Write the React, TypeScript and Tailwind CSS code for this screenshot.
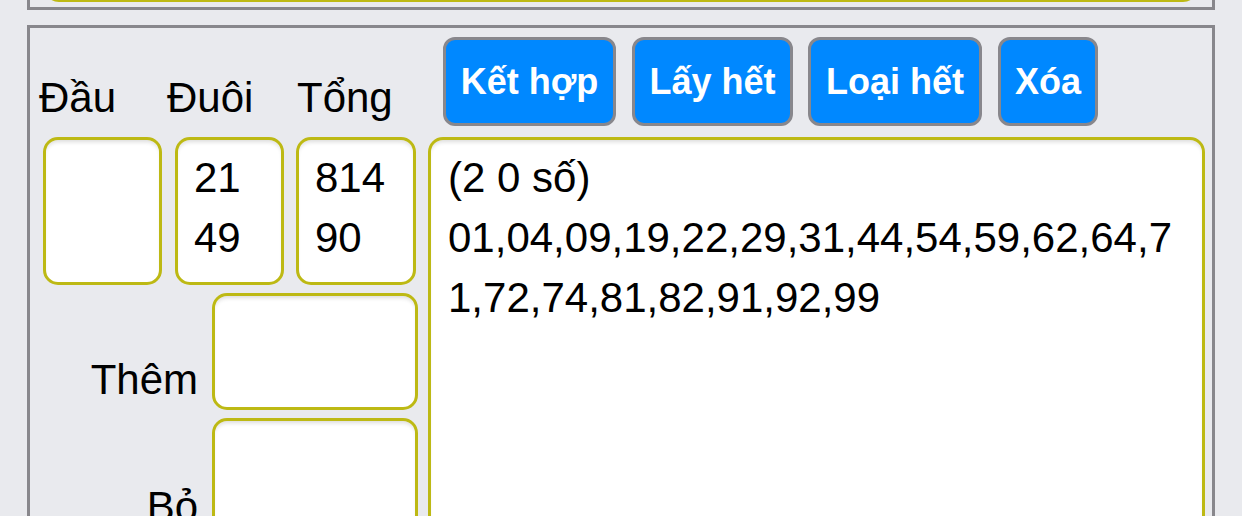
export default function App() {
  const box =
    "rounded-[15px] border-[3px] border-[#bdb914] bg-white shadow-[inset_0_4px_4px_-2px_rgba(0,0,0,0.14)]";
  const btn =
    "h-[89px] flex items-center justify-center rounded-[12px] border-[3px] border-[#88878c] bg-[#0088ff] text-white font-bold text-[36px] leading-none";
  return (
    <div className="h-[516px] w-[1242px] overflow-hidden bg-[#e9eaee] text-black font-['Liberation_Sans',Arial,sans-serif]">
      <div className="px-[27px]">
        <div className="h-[10px] overflow-hidden border-x-[3px] border-b-[3px] border-[#88878c]">
          <div className="mx-[14px] -mt-[40px] h-[42px] rounded-[15px] border-[3px] border-[#bdb914] bg-white" />
        </div>
        <div className="mt-[15px] flex h-[600px] border-[3px] border-[#88878c]">
          <div className="w-[398px] shrink-0 text-[42px] leading-[60px]">
            <div className="flex pl-[9px] pt-[40px]">
              <span className="w-[128px]">Đầu</span>
              <span className="w-[130px]">Đuôi</span>
              <span>Tổng</span>
            </div>
            <div className="mt-[9px] flex pl-[13px]">
              <div className={`${box} h-[148px] w-[119px]`} />
              <div className={`${box} ml-[13px] h-[148px] w-[109px] pl-[16px] pt-[8px]`}>
                <div>21</div>
                <div>49</div>
              </div>
              <div className={`${box} ml-[12px] h-[148px] w-[120px] pl-[16px] pt-[8px]`}>
                <div>814</div>
                <div>90</div>
              </div>
            </div>
            <div className="mt-[8px] flex items-end">
              <span className="w-[168px] text-right">Thêm</span>
              <div className={`${box} ml-[14px] h-[117px] w-[206px]`} />
            </div>
            <div className="mt-[8px] flex items-end">
              <span className="w-[168px] text-right">Bỏ</span>
              <div className={`${box} ml-[14px] h-[119px] w-[206px]`} />
            </div>
          </div>
          <div className="flex-1">
            <div className="mt-[9px] flex pl-[15px]">
              <button className={`${btn} w-[173px]`}>Kết hợp</button>
              <button className={`${btn} ml-[16px] w-[161px]`}>Lấy hết</button>
              <button className={`${btn} ml-[15px] w-[174px]`}>Loại hết</button>
              <button className={`${btn} ml-[16px] w-[100px]`}>Xóa</button>
            </div>
            <div
              className={`${box} mt-[11px] h-[500px] w-[777px] break-all px-[17px] pt-[8px] text-[42px] leading-[60px]`}
            >
              <div>(2 0 số)</div>
              <div>01,04,09,19,22,29,31,44,54,59,62,64,71,72,74,81,82,91,92,99</div>
            </div>
          </div>
        </div>
      </div>
    </div>
  );
}
